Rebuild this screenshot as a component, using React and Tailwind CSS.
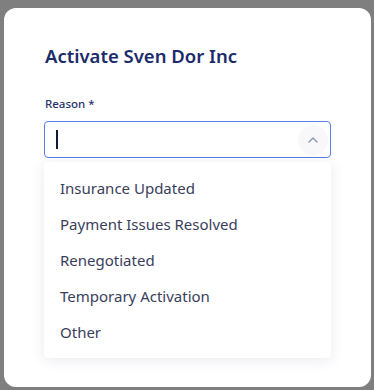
import React from "react";

const reasons = [
	"Insurance Updated",
	"Payment Issues Resolved",
	"Renegotiated",
	"Temporary Activation",
	"Other",
];

function App() {
	return (
		<div
			className="h-[390px] w-[374px] overflow-hidden bg-[#7f7f7f] pl-[4px] pr-[3px] pt-[8px]"
			style={{ fontFamily: '"Noto Sans", Arial, sans-serif' }}
		>
			<div className="h-[379px] rounded-[12px] bg-white px-[40px] pt-[34px]">
				<h2 className="text-[18.5px] font-semibold leading-[28px] text-[#1b2c6b] pl-[1px]">
					Activate Sven Dor Inc
				</h2>

				<label className="mt-[26px] mb-[9px] block pl-[1px] text-[11.5px] font-medium leading-[16px] text-[#26336b]">
					Reason *
				</label>

				<div className="relative">
					<div className="flex h-[37px] items-center justify-between rounded-[4px] border border-[#5b7fe6] pl-[11px] pr-[2px]">
						<div className="h-[19px] w-[1.5px] bg-[#111a3a]" />
						<div className="flex h-[30px] w-[30px] items-center justify-center rounded-full bg-[#f8f8fa]">
							<svg width="10" height="6" viewBox="0 0 10 6" fill="none">
								<path
									d="M1 5 L5 1 L9 5"
									stroke="#8a93b8"
									strokeWidth="1.4"
									strokeLinecap="round"
									strokeLinejoin="round"
								/>
							</svg>
						</div>
					</div>

					<ul className="absolute left-0 right-0 top-[41px] rounded-[4px] bg-white py-[8px] shadow-[0_2px_14px_rgba(40,50,100,0.10)]">
						{reasons.map((r) => (
							<li
								key={r}
								className="flex h-[36px] items-center px-[16px] text-[15px] text-[#3a3e5b]"
							>
								{r}
							</li>
						))}
					</ul>
				</div>
			</div>
		</div>
	);
}

export default App;
